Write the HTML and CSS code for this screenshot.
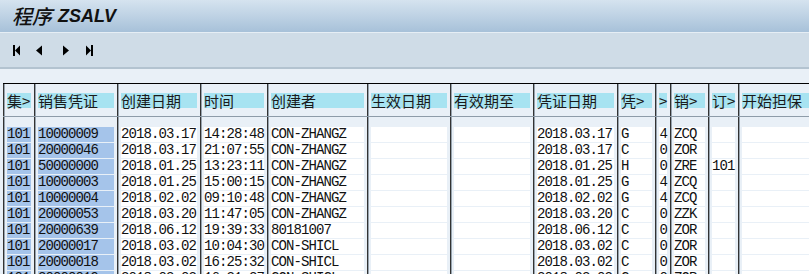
FILE: index.html
```html
<!DOCTYPE html>
<html lang="zh">
<head>
    <meta charset="UTF-8">
    <title>程序 ZSALV</title>
    <link rel="stylesheet" href="styles.css">
</head>
<body>
    <div class="title-bar">
        <span class="title-cn">程序</span><span class="title-code">ZSALV</span>
    </div>

    <div class="toolbar">
        <span class="nav-btn">
            <svg width="10" height="11" viewBox="0 0 10 11"><rect x="1" y="0" width="2" height="11"/><polygon points="3,5.5 8,0.5 8,10.5"/></svg>
        </span>
        <span class="nav-btn">
            <svg width="10" height="11" viewBox="0 0 10 11"><polygon points="0,5.5 6,0.5 6,10.5"/></svg>
        </span>
        <span class="nav-btn">
            <svg width="10" height="11" viewBox="0 0 10 11"><polygon points="3,0.5 9,5.5 3,10.5"/></svg>
        </span>
        <span class="nav-btn">
            <svg width="10" height="11" viewBox="0 0 10 11"><polygon points="2,0.5 7,5.5 2,10.5"/><rect x="7" y="0" width="2" height="11"/></svg>
        </span>
    </div>

    <div class="content">
        <div class="grid">
            <div class="row head">
                <div class="h">集&gt;</div>
                <div class="h">销售凭证</div>
                <div class="h">创建日期</div>
                <div class="h">时间</div>
                <div class="h">创建者</div>
                <div class="h">生效日期</div>
                <div class="h">有效期至</div>
                <div class="h">凭证日期</div>
                <div class="h">凭&gt;</div>
                <div class="h">&gt;</div>
                <div class="h">销&gt;</div>
                <div class="h">订&gt;</div>
                <div class="h last">开始担保</div>
            </div>

            <div class="row">
                <div class="c k">101</div><div class="c k">10000009</div><div class="c">2018.03.17</div><div class="c">14:28:48</div><div class="c">CON-ZHANGZ</div><div class="c"></div><div class="c"></div><div class="c">2018.03.17</div><div class="c">G</div><div class="c r">4</div><div class="c">ZCQ</div><div class="c"></div><div class="c last"></div>
            </div>
            <div class="row">
                <div class="c k">101</div><div class="c k">20000046</div><div class="c">2018.03.17</div><div class="c">21:07:55</div><div class="c">CON-ZHANGZ</div><div class="c"></div><div class="c"></div><div class="c">2018.03.17</div><div class="c">C</div><div class="c r">0</div><div class="c">ZOR</div><div class="c"></div><div class="c last"></div>
            </div>
            <div class="row">
                <div class="c k">101</div><div class="c k">50000000</div><div class="c">2018.01.25</div><div class="c">13:23:11</div><div class="c">CON-ZHANGZ</div><div class="c"></div><div class="c"></div><div class="c">2018.01.25</div><div class="c">H</div><div class="c r">0</div><div class="c">ZRE</div><div class="c">101</div><div class="c last"></div>
            </div>
            <div class="row">
                <div class="c k">101</div><div class="c k">10000003</div><div class="c">2018.01.25</div><div class="c">15:00:15</div><div class="c">CON-ZHANGZ</div><div class="c"></div><div class="c"></div><div class="c">2018.01.25</div><div class="c">G</div><div class="c r">4</div><div class="c">ZCQ</div><div class="c"></div><div class="c last"></div>
            </div>
            <div class="row">
                <div class="c k">101</div><div class="c k">10000004</div><div class="c">2018.02.02</div><div class="c">09:10:48</div><div class="c">CON-ZHANGZ</div><div class="c"></div><div class="c"></div><div class="c">2018.02.02</div><div class="c">G</div><div class="c r">4</div><div class="c">ZCQ</div><div class="c"></div><div class="c last"></div>
            </div>
            <div class="row">
                <div class="c k">101</div><div class="c k">20000053</div><div class="c">2018.03.20</div><div class="c">11:47:05</div><div class="c">CON-ZHANGZ</div><div class="c"></div><div class="c"></div><div class="c">2018.03.20</div><div class="c">C</div><div class="c r">0</div><div class="c">ZZK</div><div class="c"></div><div class="c last"></div>
            </div>
            <div class="row">
                <div class="c k">101</div><div class="c k">20000639</div><div class="c">2018.06.12</div><div class="c">19:39:33</div><div class="c">80181007</div><div class="c"></div><div class="c"></div><div class="c">2018.06.12</div><div class="c">C</div><div class="c r">0</div><div class="c">ZOR</div><div class="c"></div><div class="c last"></div>
            </div>
            <div class="row">
                <div class="c k">101</div><div class="c k">20000017</div><div class="c">2018.03.02</div><div class="c">10:04:30</div><div class="c">CON-SHICL</div><div class="c"></div><div class="c"></div><div class="c">2018.03.02</div><div class="c">C</div><div class="c r">0</div><div class="c">ZOR</div><div class="c"></div><div class="c last"></div>
            </div>
            <div class="row">
                <div class="c k">101</div><div class="c k">20000018</div><div class="c">2018.03.02</div><div class="c">16:25:32</div><div class="c">CON-SHICL</div><div class="c"></div><div class="c"></div><div class="c">2018.03.02</div><div class="c">C</div><div class="c r">0</div><div class="c">ZOR</div><div class="c"></div><div class="c last"></div>
            </div>
            <div class="row">
                <div class="c k">101</div><div class="c k">20000019</div><div class="c">2018.03.02</div><div class="c">16:31:27</div><div class="c">CON-SHICL</div><div class="c"></div><div class="c"></div><div class="c">2018.03.02</div><div class="c">C</div><div class="c r">0</div><div class="c">ZOR</div><div class="c"></div><div class="c last"></div>
            </div>
        </div>
    </div>
</body>
</html>
```

FILE: styles.css
```css
html, body {
    margin: 0;
    background: #e9f0f7;
    overflow: hidden;
}
body {
    font-family: "Noto Sans CJK SC", sans-serif;
    color: #000;
}

.title-bar {
    height: 32px;
    padding-left: 12px;
    display: flex;
    align-items: center;
    background: linear-gradient(#d5e3ef, #a7c1d9);
    color: #111;
}
.title-cn {
    font-family: "Noto Sans CJK SC", sans-serif;
    font-style: italic;
    font-weight: 500;
    font-size: 20px;
    line-height: 24px;
}
.title-code {
    margin-left: 6px;
    font-family: "Liberation Sans", Arial, sans-serif;
    font-weight: bold;
    font-style: italic;
    font-size: 18px;
    line-height: 24px;
}

.toolbar {
    height: 34px;
    padding-left: 5px;
    display: flex;
    align-items: center;
    background: #cfdce7;
    border-top: 1px solid #e6eef5;
    border-bottom: 2px solid #b3c3d0;
}
.nav-btn {
    width: 24px;
    height: 24px;
    display: flex;
    align-items: center;
    justify-content: center;
}
.nav-btn svg {
    fill: #000;
}

.content {
    padding: 14px 0 0 3px;
}
.grid {
    border-top: 1px solid #000;
}
.row {
    display: grid;
    grid-template-columns: 31px 83px 83px 67px 100px 83px 83px 84px 38px 15px 38px 30px 1fr;
}
.head {
    border-bottom: 1px solid #8e9ca9;
}

.h, .c {
    border-left: 1px solid #333;
    box-shadow: inset 1px 0 0 #97a3ae;
    padding: 0 3px;
    background-clip: content-box;
    white-space: nowrap;
    overflow: hidden;
    line-height: 15px;
}
.h {
    padding-top: 9px;
    padding-bottom: 8px;
    background-color: #a7e3f1;
    font-size: 15px;
    color: #1a1a1a;
}
.c {
    padding-top: 1px;
    height: 15px;
    background-color: #fff;
    font-family: "Liberation Mono", monospace;
    font-size: 14px;
    letter-spacing: -0.9px;
    color: #111;
}
.row:nth-child(2) .c {
    padding-top: 10px;
}
.c.k {
    background-color: #a5c4ea;
}
.c.r {
    text-align: right;
}
.last {
    padding-right: 0;
}
```
